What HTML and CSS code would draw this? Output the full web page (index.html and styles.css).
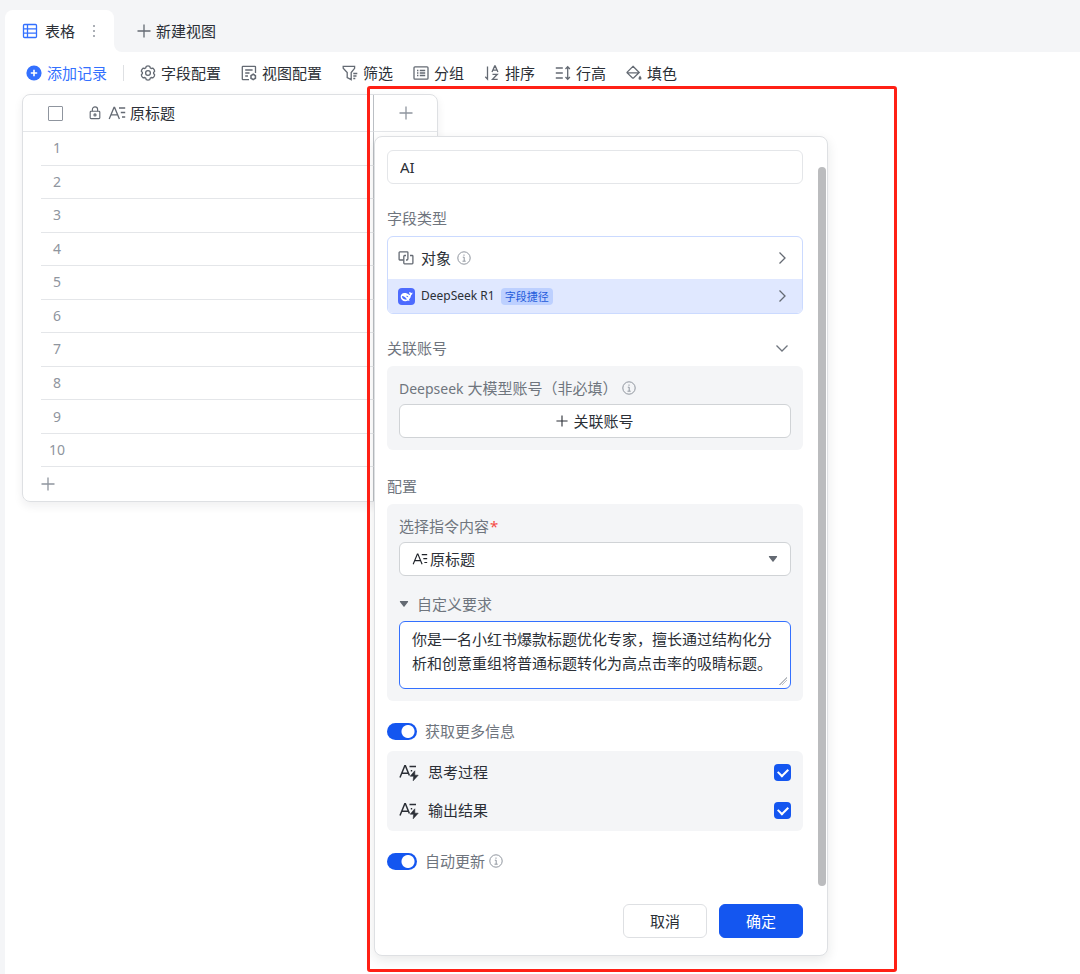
FILE: index.html
```html
<!DOCTYPE html>
<html lang="zh-CN">
<head>
<meta charset="utf-8">
<title>表格</title>
<link rel="stylesheet" href="styles.css">
</head>
<body>
<svg class="sprite" aria-hidden="true">
  <symbol id="i-text" viewBox="0 0 18 16"><path d="M1.2 14 6 2.4h.6L11.400 14M3 9.800h6.600M11 3h6.200M12.800 7.500h4.400M14 12h3.200" /></symbol>
  <symbol id="i-plus" viewBox="0 0 14 14"><path d="M7 .5v13M.5 7h13"/></symbol>
  <symbol id="i-info" viewBox="0 0 14 14"><circle cx="7" cy="7" r="6.200"/><path d="M5.800 6.200H7.200V10M5.500 10.200h3.200M7 3.500v1.300"/></symbol>
  <symbol id="i-right" viewBox="0 0 14 14"><path d="m4.500 1.500 5.500 5.500-5.500 5.500"/></symbol>
  <symbol id="i-caret" viewBox="0 0 10 8"><path d="M1.400 1h7.200c.5 0 .7.500.4.900L5.500 6.600a.6.600 0 0 1-1 0L1 1.900C.7 1.500.9 1 1.400 1z"/></symbol>
  <symbol id="i-ai" viewBox="0 0 20 18"><path d="M1 14.500 5.800 2.800h.6l4 9.700M2.800 10.300h6.600M10.500 3.500h6.500M11.800 7.800h1.400" fill="none" stroke="currentColor" stroke-width="1.500"/><path d="m15.800 7.800-4.600 5.400h3.400l-.4 4.600 5-5.600h-3.400z" fill="currentColor" stroke="currentColor" stroke-width=".6" stroke-linejoin="round"/></symbol>
</svg>

<header class="tabs">
  <div class="tab-active">
    <svg class="icon blue" viewBox="0 0 16 16"><rect x="1.500" y="1.500" width="13" height="13" rx="1"/><path d="M5.500 1.500v13M1.500 5.800h13M1.500 10.200h13"/></svg>
    <span>表格</span>
    <button class="more" aria-label="更多"><svg viewBox="0 0 4 14"><circle cx="2" cy="2" r="1"/><circle cx="2" cy="7" r="1"/><circle cx="2" cy="12" r="1"/></svg></button>
  </div>
  <div class="tab-rest">
    <button class="new-view"><svg class="icon-sm"><use href="#i-plus"/></svg>新建视图</button>
  </div>
</header>

<main class="sheet">
  <nav class="toolbar">
    <button class="tool primary"><svg class="icon" viewBox="0 0 16 16"><circle cx="8" cy="8" r="7.600" fill="currentColor" stroke="none"/><path d="M8 4.800v6.400M4.800 8h6.400" stroke="#fff" stroke-width="1.600"/></svg>添加记录</button>
    <span class="divider"></span>
    <button class="tool"><svg class="icon" viewBox="0 0 16 16"><path d="M6.300 1.300Q8 .5 9.700 1.300L10.300 2.900 11.300 3.500 13 3.200Q14.500 4.400 14.700 6.200L13.600 7.500V8.500L14.700 9.800Q14.500 11.600 13 12.800L11.300 12.500 10.300 13.100 9.700 14.700Q8 15.500 6.300 14.700L5.700 13.100 4.700 12.500 3 12.800Q1.500 11.600 1.300 9.800L2.400 8.500V7.500L1.300 6.200Q1.500 4.400 3 3.200L4.700 3.500 5.700 2.900z" stroke-linejoin="round"/><circle cx="8" cy="8" r="2.400"/></svg>字段配置</button>
    <button class="tool"><svg class="icon" viewBox="0 0 16 16"><path d="M14.500 8V2a.7.7 0 0 0-.7-.7H2A.7.7 0 0 0 1.300 2v12c0 .4.300.7.700.7h6M4.200 5h7.400M4.200 8h4.300M4.200 11h2.800"/><path d="m12.200 9.300 2.200 1.300v2.700l-2.200 1.300-2.200-1.300v-2.700z" stroke-width="1.600"/></svg>视图配置</button>
    <button class="tool"><svg class="icon" viewBox="0 0 16 16"><path d="M1.200 1.300h11.400v2L9.200 7.500v7.200l-4-2V7.500l-4-4.200zM11.300 8.500h4M11.300 11h3.200M11.300 13.500h2"/></svg>筛选</button>
    <button class="tool"><svg class="icon" viewBox="0 0 16 16"><rect x="1" y="1.800" width="14" height="12.400" rx="1"/><path d="M4 5.500h1.400M4 8h1.400M4 10.500h1.400M6.800 5.500h5.400M6.800 8h5.400M6.800 10.500h5.400"/></svg>分组</button>
    <button class="tool"><svg class="icon" viewBox="0 0 16 16"><path d="M3.500 1.500v12.700L1.300 11.800M8 7l2.700-6h.5l2.700 6M8.800 5.200h4.300M8.500 9.300h4.800l-4.800 5h5.200"/></svg>排序</button>
    <button class="tool"><svg class="icon" viewBox="0 0 16 16"><path d="M.8 3h7M.8 8h7M.8 13h7M12.700 1.800v12.400M10.500 4l2.200-2.400L14.900 4M10.500 12l2.200 2.400 2.200-2.400"/></svg>行高</button>
    <button class="tool"><svg class="icon" viewBox="0 0 16 16"><path d="m7 1.300 6.200 6.200L7.500 13a.8.8 0 0 1-1 0L1.200 7.900a.6.600 0 0 1 0-.8zM1 7.800h12"/><path d="M14 10.500c1 1.400 1.500 2.100 1.500 2.800a1.500 1.500 0 0 1-3 0c0-.7.500-1.400 1.500-2.800z" fill="currentColor" stroke="none"/></svg>填色</button>
  </nav>

  <div class="workspace">
    <table class="grid">
      <thead>
        <tr>
          <th class="gutter"></th>
          <th class="num"><input class="check-all" type="checkbox" aria-label="全选"></th>
          <th class="title-col"><div class="col-name">
            <svg class="icon-sm" viewBox="0 0 14 16"><rect x="1.500" y="6" width="11" height="8.500" rx="1"/><path d="M4 6V4a3 3 0 0 1 6 0v2"/><circle cx="7" cy="10.200" r="1.200"/></svg>
            <svg class="icon-a"><use href="#i-text"/></svg><span>原标题</span></div></th>
          <th class="add-col"><button aria-label="添加字段"><svg class="icon-sm"><use href="#i-plus"/></svg></button></th>
        </tr>
      </thead>
      <tbody>
        <tr><td class="gutter"></td><td class="num">1</td><td></td><td></td></tr>
        <tr><td class="gutter"></td><td class="num">2</td><td></td><td></td></tr>
        <tr><td class="gutter"></td><td class="num">3</td><td></td><td></td></tr>
        <tr><td class="gutter"></td><td class="num">4</td><td></td><td></td></tr>
        <tr><td class="gutter"></td><td class="num">5</td><td></td><td></td></tr>
        <tr><td class="gutter"></td><td class="num">6</td><td></td><td></td></tr>
        <tr><td class="gutter"></td><td class="num">7</td><td></td><td></td></tr>
        <tr><td class="gutter"></td><td class="num">8</td><td></td><td></td></tr>
        <tr><td class="gutter"></td><td class="num">9</td><td></td><td></td></tr>
        <tr><td class="gutter"></td><td class="num">10</td><td></td><td></td></tr>
        <tr class="add-row"><td class="gutter"></td><td><button aria-label="添加行"><svg class="icon-sm"><use href="#i-plus"/></svg></button></td><td></td><td></td></tr>
      </tbody>
    </table>

    <form class="popup">
      <input class="field" type="text" value="AI" aria-label="字段名称">

      <h2 class="label">字段类型</h2>
      <div class="types">
        <button type="button" class="type">
          <svg class="icon" viewBox="0 0 16 16"><path d="M5.500 10H1.800a.7.700 0 0 1-.7-.7V2.600c0-.4.300-.7.700-.7h7.400c.4 0 .7.300.7.700v6.200c0 .7-.4 1.200-1 1.200H8"/><path d="M8 5.500H6.800c-.7 0-1 .4-1 1v6.600c0 .4.300.7.700.7h7.700c.4 0 .7-.3.700-.7V6.200c0-.4-.3-.7-.7-.7H12"/></svg>
          <span>对象</span><svg class="icon-info"><use href="#i-info"/></svg>
          <svg class="arrow"><use href="#i-right"/></svg>
        </button>
        <button type="button" class="type selected">
          <svg class="logo" viewBox="0 0 17 17"><rect width="17" height="17" rx="4" fill="#4d6bfe"/><path d="M14.500 4.600c-.9.500-1.600.3-2.100-.2-.6-.6-1.200-.4-1.200.3 0 .9.400 1.500 1 1.900-.3.500-.7.600-1.200.2C9.800 5.600 8.300 5 6.500 5 4 5 2.500 6.700 2.700 9c.2 2.600 2.200 4.300 4.700 4.200 1 0 1.800-.3 2.500-.8.600.4 1.300.5 1.800.2-.6-.4-.8-.8-.7-1.200 1.200-1.100 1.800-2.500 2-4 .9-.5 1.500-1.400 1.500-2.800z" fill="#fff"/><path d="M4 7.900c2 0 3.700 1.300 4.900 3.700-1.900.2-3.900-.3-4.600-2-.2-.5-.3-1.100-.3-1.700z" fill="#4d6bfe"/><path d="M8.200 7.900c.9-.3 1.900.2 2.100 1.400l-1.300-.2z" fill="#4d6bfe"/></svg>
          <span class="model">DeepSeek R1</span><span class="tag">字段捷径</span>
          <svg class="arrow"><use href="#i-right"/></svg>
        </button>
      </div>

      <div class="section-head">
        <h2>关联账号</h2>
        <button type="button" aria-label="收起"><svg class="down" viewBox="0 0 14 14"><path d="M1.500 4.500 7 10l5.500-5.500"/></svg></button>
      </div>
      <section class="panel">
        <div class="panel-label"><span><span class="latin">Deepseek</span> 大模型账号（非必填）</span><svg class="icon-info"><use href="#i-info"/></svg></div>
        <button type="button" class="link-account"><svg class="plus-dark"><use href="#i-plus"/></svg>关联账号</button>
      </section>

      <h2 class="label config">配置</h2>
      <section class="panel">
        <label class="panel-label tight" for="source">选择指令内容<span class="required">*</span></label>
        <div class="select-box">
          <svg class="icon-a dark"><use href="#i-text"/></svg>
          <select id="source"><option>原标题</option></select>
          <svg class="caret"><use href="#i-caret"/></svg>
        </div>
        <label class="custom-label" for="custom"><svg class="caret"><use href="#i-caret"/></svg>自定义要求</label>
        <textarea id="custom">你是一名小红书爆款标题优化专家，擅长通过结构化分析和创意重组将普通标题转化为高点击率的吸睛标题。</textarea>
      </section>

      <label class="switch-row"><input class="switch" type="checkbox" checked>获取更多信息</label>
      <section class="outputs">
        <label class="output"><svg class="icon-ai"><use href="#i-ai"/></svg><span>思考过程</span><input class="tick" type="checkbox" checked></label>
        <label class="output"><svg class="icon-ai"><use href="#i-ai"/></svg><span>输出结果</span><input class="tick" type="checkbox" checked></label>
      </section>
      <label class="switch-row auto"><input class="switch" type="checkbox" checked>自动更新<svg class="icon-info"><use href="#i-info"/></svg></label>

      <footer class="actions">
        <button type="button">取消</button>
        <button type="button" class="confirm">确定</button>
      </footer>
      <div class="thumb"></div>
    </form>
    <div class="highlight"></div>
  </div>
</main>
</body>
</html>
```
FILE: styles.css
```css
* { box-sizing: border-box; }

body {
  margin: 0;
  min-height: 100vh;
  padding-left: 5px;
  display: flex;
  flex-direction: column;
  background: #f4f5f7;
  color: #2b2f36;
  font: 15px/20px "Noto Sans", "Noto Sans CJK SC", sans-serif;
}

button, input, select, textarea { font: inherit; color: inherit; }
button { padding: 0; border: 0; background: none; }
h2 { margin: 0; font-size: 15px; font-weight: 400; }
svg { flex: none; display: block; fill: none; stroke: currentColor; stroke-width: 1.3; }
.sprite { position: absolute; width: 0; height: 0; }

.icon { width: 16px; height: 16px; color: #646a73; }
.icon-sm { width: 14px; height: 14px; color: #646a73; }
.icon-info { width: 14px; height: 14px; color: #8f959e; stroke-width: 1; }
.icon-a { width: 18px; height: 16px; color: #646a73; }
.icon-ai { width: 20px; height: 18px; color: #2b2f36; stroke: none; }
.caret { width: 10px; height: 8px; color: #646a73; fill: currentColor; stroke: none; }
.blue { color: #3370ff; }
.dark { color: #1f2329; }

/* View tabs */
.tabs { display: flex; height: 52px; padding-top: 10px; background: linear-gradient(#f4f5f7 0 0) 0 0 / 100% 20px no-repeat, #fff; }
.tab-active {
  display: flex;
  align-items: center;
  gap: 7px;
  width: 109px;
  padding-left: 17px;
  border-radius: 8px 8px 0 0;
  background: #fff;
}
.more { width: 4px; margin-left: 10px; color: #8f959e; }
.more svg { width: 4px; height: 14px; fill: currentColor; stroke: none; }
.tab-rest {
  flex: 1;
  display: flex;
  align-items: center;
  padding-left: 23px;
  border-bottom-left-radius: 8px;
  background: #f4f5f7;
}
.new-view { display: flex; align-items: center; gap: 5px; }

/* Toolbar */
.sheet { flex: 1; background: #fff; }
.toolbar { display: flex; align-items: center; gap: 20px; height: 42px; padding: 0 0 1px 21px; }
.tool { display: flex; align-items: center; gap: 5px; white-space: nowrap; }
.primary, .primary .icon { color: #3370ff; }
.divider { width: 1px; height: 16px; margin: 0 -4px; background: #dee0e3; }

/* Records */
.workspace { position: relative; padding-left: 17px; }
.grid {
  width: 416px;
  height: 408px;
  table-layout: fixed;
  border: 1px solid #dee0e3;
  border-radius: 8px;
  border-spacing: 0;
  box-shadow: 0 4px 10px rgba(31, 35, 41, .07);
}
.grid th, .grid td { height: 33px; padding: 0; border-bottom: 1px solid #e4e6e9; }
.grid th { height: 37px; font-weight: 400; text-align: left; }
.grid td.gutter, .grid .add-row td { border-bottom: 0; }
.grid .gutter { width: 18px; }
.grid .num { width: 32px; text-align: center; }
.grid td.num { color: #8f959e; font-size: 14px; }
.grid .add-col { width: 64px; border-left: 1px solid #bbbfc4; }
.grid td:last-child { border-left: 1px solid #bbbfc4; }
.grid .add-col button { display: block; margin: 0 auto; }
.grid .add-col svg, .add-row svg { color: #8f959e; }
.add-row button { display: block; }
.check-all {
  appearance: none;
  display: block;
  width: 15px;
  height: 15px;
  margin: 0 7px;
  border: 1px solid #8f959e;
  border-radius: 1px;
}
.col-name { display: flex; align-items: center; gap: 4px; padding-left: 15px; }
.col-name .icon-a { margin-left: 2px; }

/* Field editor */
.popup {
  position: absolute;
  top: 42px;
  left: 369px;
  width: 454px;
  padding: 13px 24px 17px 12px;
  border: 1px solid #dee0e3;
  border-radius: 8px;
  background: #fff;
  box-shadow: 0 4px 12px rgba(31, 35, 41, .1);
}
.field {
  display: block;
  width: 100%;
  height: 34px;
  padding: 0 12px;
  border: 1px solid #e4e6e9;
  border-radius: 6px;
}
.label, .section-head, .panel-label, .custom-label, .switch-row { color: #6f757e; }
.label { margin: 24px 0 8px; }
.label.config { margin-top: 26px; }
.types { overflow: hidden; border: 1px solid #cbdaff; border-radius: 6px; }
.type { display: flex; align-items: center; width: 100%; height: 42px; padding: 0 13px 0 10px; }
.type span { margin: 0 6px 0 7px; }
.type.selected { height: 34px; background: #e0e8ff; }
.logo { width: 17px; height: 17px; stroke: none; }
.type .model { margin-left: 6px; font-size: 12px; }
.type .tag {
  margin: 0;
  padding: 0 4px;
  border-radius: 4px;
  background: #bdd0ff;
  color: #245bdb;
  font-size: 11px;
  line-height: 17px;
}
.arrow { width: 14px; height: 14px; margin-left: auto; color: #646a73; }
.section-head { display: flex; justify-content: space-between; align-items: center; margin: 24px 0 8px; padding-right: 14px; }
.down { width: 14px; height: 14px; }
.panel { padding: 12px; border-radius: 6px; background: #f4f5f7; }
.panel-label { display: flex; align-items: center; gap: 4px; margin-bottom: 6px; }
.panel-label.tight { gap: 1px; }
.latin { font-size: 14px; line-height: 16px; }
.required { color: #f54a45; }
.link-account {
  display: flex;
  align-items: center;
  justify-content: center;
  gap: 5px;
  width: 100%;
  height: 34px;
  border: 1px solid #d0d3d6;
  border-radius: 6px;
  background: #fff;
}
.plus-dark { width: 12px; height: 12px; }
.select-box {
  display: flex;
  align-items: center;
  height: 34px;
  padding: 0 12px;
  border: 1px solid #d0d3d6;
  border-radius: 6px;
  background: #fff;
}
.select-box .icon-a { width: 16px; height: 14px; }
.select-box select { appearance: none; flex: 1; padding: 0 2px; border: 0; background: none; }
.custom-label { display: flex; align-items: center; gap: 8px; margin: 18px 0 7px; }
textarea {
  display: block;
  width: 100%;
  height: 68px;
  padding: 5px 12px 13px;
  border: 1px solid #3370ff;
  border-radius: 6px;
  background: #fff;
  line-height: 24px;
  resize: vertical;
}
textarea::-webkit-resizer {
  background: linear-gradient(135deg, transparent 50%, #bbbfc4 50% 57%, transparent 57% 68%, #bbbfc4 68% 75%, transparent 75%) 4px 4px / 8px 8px no-repeat;
}
.switch-row { display: flex; align-items: center; margin: 20px 0 10px; }
.switch {
  appearance: none;
  width: 30px;
  height: 17px;
  margin: 0 8px 0 0;
  border-radius: 9px;
  background: radial-gradient(circle at 21px 50%, #fff 6px, #1456f0 7px);
}
.switch-row .icon-info { margin-left: 4px; }
.outputs { padding: 2px 12px; border-radius: 6px; background: #f4f5f7; }
.output { display: flex; align-items: center; gap: 9px; height: 38px; }
.tick {
  appearance: none;
  display: grid;
  place-items: center;
  width: 17px;
  height: 17px;
  margin: 0 0 0 auto;
  border-radius: 4px;
  background: #1456f0;
}
.tick::before {
  content: "";
  width: 8px;
  height: 5px;
  margin-bottom: 2px;
  border: solid #fff;
  border-width: 0 0 2px 2px;
  transform: rotate(-45deg);
}
.switch-row.auto { margin-bottom: 33px; }
.actions { display: flex; justify-content: flex-end; gap: 12px; }
.actions button { width: 84px; height: 34px; border: 1px solid #dee0e3; border-radius: 6px; background: #fff; }
.actions .confirm { border-color: #1456f0; background: #1456f0; color: #fff; }
.thumb { position: absolute; top: 30px; right: 1px; bottom: 69px; width: 8px; border-radius: 4px; background: #bbbcbe; }

/* Marker drawn round the editor */
.highlight {
  position: absolute;
  top: -8px;
  left: 362px;
  width: 530px;
  height: 886px;
  border: 3px solid #ff2015;
  border-radius: 3px;
  pointer-events: none;
}
```
